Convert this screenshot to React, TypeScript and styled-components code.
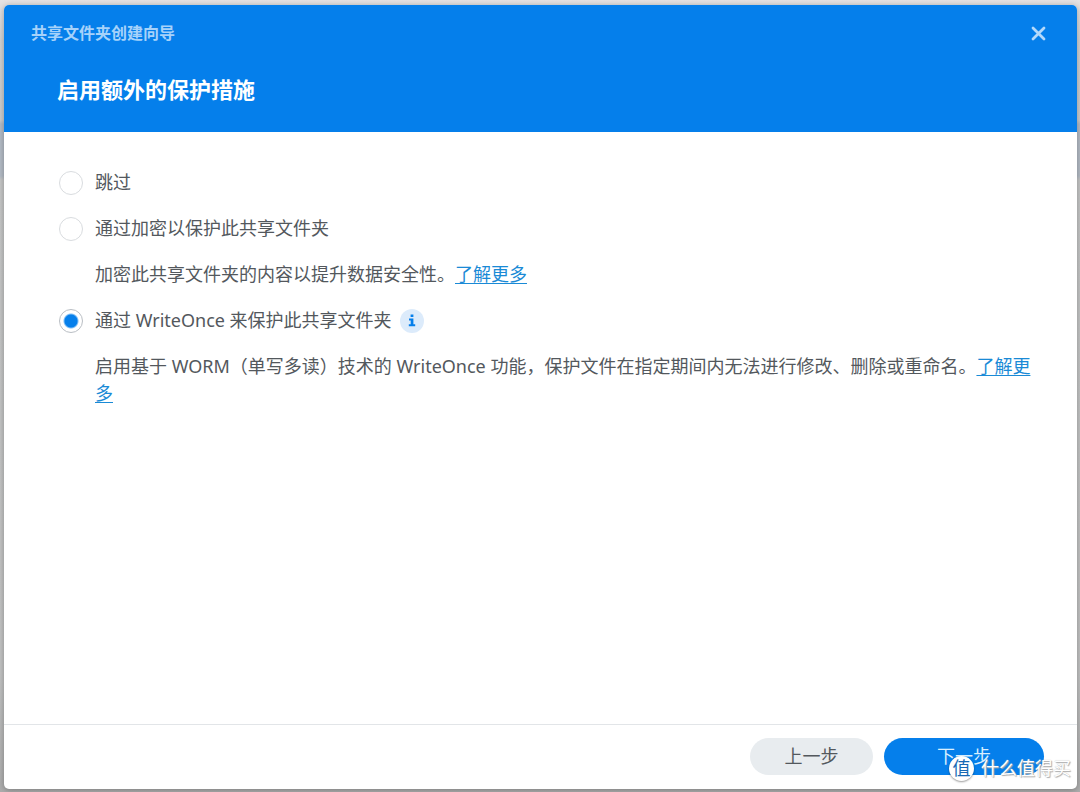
import React from 'react';
import styled, { createGlobalStyle } from 'styled-components';

const GlobalStyle = createGlobalStyle`
  *, *::before, *::after { box-sizing: border-box; }
  body {
    margin: 0;
    background: #c6c7c8;
    color: #53585d;
    font-family: 'Noto Sans', 'Noto Sans CJK SC', sans-serif;
    font-size: 18px;
    line-height: 27px;
  }
  button, input { font: inherit; color: inherit; }
`;

const Backdrop = styled.main`
  min-height: 100vh;
  display: flex;
  padding: 5px 3px 3px 4px;
  background: linear-gradient(
    #e6e2e3 0,
    #d3d3d3 40px,
    #cbcccc 120px,
    #b4bcc6 124px,
    #b4bcc6 176px,
    #c6c7c7 180px,
    #c2c3c3 85%,
    #adadad 100%
  );
`;

const Dialog = styled.section`
  flex: 1;
  display: flex;
  flex-direction: column;
  overflow: hidden;
  border-radius: 5px;
  background: #fff;
  box-shadow: 0 1px 6px rgba(0, 0, 0, 0.3);
`;

const Header = styled.header`
  height: 127px;
  padding: 15px 27px 0;
  background: #057feb;
  color: #fff;
`;

const TitleBar = styled.div`
  display: flex;
  align-items: center;
  justify-content: space-between;
  height: 26px;
`;

const Title = styled.p`
  margin: 0;
  font-size: 16px;
  font-weight: 700;
  color: #a6d2fa;
`;

const CloseButton = styled.button`
  display: flex;
  padding: 4px;
  border: 0;
  background: none;
  color: #b4d9fb;
`;

const Heading = styled.h1`
  margin: 28px 26px 0;
  font-size: 22px;
  line-height: 30px;
  font-weight: 700;
`;

const Body = styled.form`
  flex: 1;
  display: flex;
  flex-direction: column;
  gap: 19px;
  padding: 37px 40px 24px 55px;
`;

const Option = styled.div`
  display: flex;
  align-items: center;
  height: 27px;
`;

const OptionLabel = styled.label`
  display: flex;
  align-items: center;
  gap: 12px;
`;

const Radio = styled.input`
  appearance: none;
  width: 24px;
  height: 24px;
  margin: 0;
  border: 1px solid #d9dcdf;
  border-radius: 50%;
  background: #fff;

  &:checked {
    border-color: #b9bec4;
    background: radial-gradient(circle, #057feb 6px, #fff 8px);
  }
`;

const Description = styled.p`
  margin: 0 0 0 36px;
`;

const MoreLink = styled.a`
  color: #1a8ad6;
  text-decoration: underline;
  text-underline-offset: 2px;
`;

const InfoButton = styled.button`
  display: flex;
  align-items: center;
  justify-content: center;
  width: 24px;
  height: 24px;
  margin-left: 8px;
  padding: 0;
  border: 0;
  border-radius: 50%;
  background: #dcebfb;
  color: #057feb;
`;

const Footer = styled.footer`
  display: flex;
  justify-content: flex-end;
  gap: 11px;
  padding: 13px 33px 14px;
  border-top: 1px solid #e2e5e8;
`;

const ActionButton = styled.button<{ $primary?: boolean }>`
  width: ${({ $primary }) => ($primary ? '160px' : '123px')};
  height: 37px;
  padding: 0;
  border: 0;
  border-radius: 19px;
  background: ${({ $primary }) => ($primary ? '#057feb' : '#e8ecef')};
  color: ${({ $primary }) => ($primary ? '#d9efff' : '#53585d')};
`;

const Watermark = styled.div`
  position: absolute;
  right: 9px;
  bottom: 10px;
  display: flex;
  align-items: center;
  gap: 7px;
  color: #fff;
  text-shadow: 0 0 1px #b0b0b0, 1px 1px 1px #aaa;
  pointer-events: none;
`;

const Seal = styled.span`
  display: flex;
  align-items: center;
  justify-content: center;
  width: 25px;
  height: 25px;
  border-radius: 50%;
  background: #fff;
  color: #1769b4;
  text-shadow: none;
  box-shadow: 0 1px 2px rgba(0, 0, 0, 0.4);
`;

export default function App() {
  return (
    <Backdrop>
      <GlobalStyle />
      <Dialog role="dialog" aria-labelledby="wizard-title">
        <Header>
          <TitleBar>
            <Title id="wizard-title">共享文件夹创建向导</Title>
            <CloseButton type="button" aria-label="关闭">
              <svg width="15" height="15" viewBox="0 0 15 15" fill="none" stroke="currentColor" strokeWidth="2.8" strokeLinecap="round">
                <path d="M2 2l11 11M13 2L2 13" />
              </svg>
            </CloseButton>
          </TitleBar>
          <Heading>启用额外的保护措施</Heading>
        </Header>
        <Body id="protection">
          <Option>
            <OptionLabel>
              <Radio type="radio" name="protection" value="skip" />
              跳过
            </OptionLabel>
          </Option>
          <Option>
            <OptionLabel>
              <Radio type="radio" name="protection" value="encrypt" />
              通过加密以保护此共享文件夹
            </OptionLabel>
          </Option>
          <Description>
            加密此共享文件夹的内容以提升数据安全性。<MoreLink href="#encryption">了解更多</MoreLink>
          </Description>
          <Option>
            <OptionLabel>
              <Radio type="radio" name="protection" value="writeonce" defaultChecked />
              通过 WriteOnce 来保护此共享文件夹
            </OptionLabel>
            <InfoButton type="button" aria-label="信息">
              <svg width="8" height="13" viewBox="0 0 8 13" fill="currentColor">
                <path d="M2.6 0.5h2.8v2.6H2.6zM1 4.6h4.4v5.6H7.2v2H0.8v-2h1.9V6.5H1z" />
              </svg>
            </InfoButton>
          </Option>
          <Description>
            启用基于 WORM（单写多读）技术的 WriteOnce 功能，保护文件在指定期间内无法进行修改、删除或重命名。<MoreLink href="#writeonce">了解更多</MoreLink>
          </Description>
        </Body>
        <Footer>
          <ActionButton type="button">上一步</ActionButton>
          <ActionButton type="submit" form="protection" $primary>下一步</ActionButton>
        </Footer>
      </Dialog>
      <Watermark>
        <Seal>值</Seal>
        <span>什么值得买</span>
      </Watermark>
    </Backdrop>
  );
}
